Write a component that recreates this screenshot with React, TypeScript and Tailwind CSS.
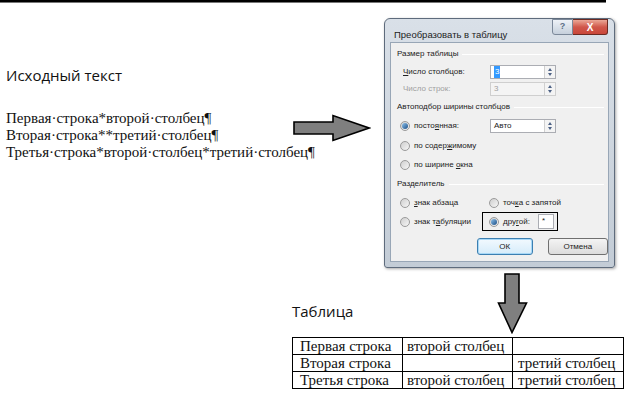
import { ReactNode } from 'react'

const ui = { fontFamily: '"Liberation Sans", Arial, sans-serif' }
const serif = { fontFamily: '"Liberation Serif", "Times New Roman", serif' }
const calibri = { fontFamily: '"Open Sans", "Noto Sans", sans-serif' }

function RightArrow() {
  return (
    <svg width="78" height="28" viewBox="0 0 78 28" className="mt-[111px] ml-[1px] shrink-0">
      <polygon points="1,8 40,8 40,1.5 76,14 40,26.5 40,20 1,20" fill="#7f7f7f" stroke="#000" strokeWidth="1.6" strokeLinejoin="miter" />
    </svg>
  )
}

function DownArrow() {
  return (
    <svg width="31" height="61" viewBox="0 0 31 61" className="shrink-0 ml-[2px]">
      <polygon points="8,1 22,1 22,30 29.5,30 15,59.5 1.5,30 8,30" fill="#7f7f7f" stroke="#000" strokeWidth="1.6" />
    </svg>
  )
}

function Radio({ checked }: { checked?: boolean }) {
  return (
    <span className="w-[10px] h-[10px] rounded-full border border-[#9a9a9a] bg-gradient-to-br from-[#cfcfcf] to-[#f6f6f6] flex items-center justify-center shrink-0">
      {checked && <span className="w-[6px] h-[6px] rounded-full bg-gradient-to-br from-[#8fc4ee] to-[#1b4f86]" />}
    </span>
  )
}

function Spin() {
  return (
    <span className="ml-auto w-[11px] h-full border-l border-[#d0d0d0] bg-[#f4f4f4] flex flex-col items-center justify-center gap-[2px]">
      <span className="w-0 h-0 border-x-[2.5px] border-x-transparent border-b-[3px] border-b-[#4d6185]" />
      <span className="w-0 h-0 border-x-[2.5px] border-x-transparent border-t-[3px] border-t-[#4d6185]" />
    </span>
  )
}

function Field({ children, disabled }: { children: ReactNode; disabled?: boolean }) {
  return (
    <span className={`ml-auto mr-[52px] w-[66px] h-[14px] border flex items-center pl-[3px] ${disabled ? 'border-[#cfcfcf] bg-[#f4f4f4] text-[#a0a0a0]' : 'border-[#abadb3] bg-white'}`}>
      {children}
      <Spin />
    </span>
  )
}

function Group({ label }: { label: string }) {
  return (
    <div className="flex items-center gap-[4px] pl-[6px] pr-[4px]">
      <span>{label}</span>
      <span className="flex-1 h-px bg-[#dcdcdc] border-b border-white" />
    </div>
  )
}

function Dialog() {
  return (
    <div className="mt-[15px] w-[231px] h-[250px] rounded-t-[6px] rounded-b-[3px] border border-[#5e6b7c] bg-gradient-to-b from-[#d9e0e8] to-[#c3ccd6] px-[5px] pb-[5px] flex flex-col shrink-0 shadow-[1px_1px_3px_rgba(0,0,0,0.35)]" style={ui}>
      <div className="h-[23px] flex items-start text-[9.5px] text-[#1c1c1c]">
        <span className="pl-[4px] pt-[9px]">Преобразовать в таблицу</span>
        <div className="ml-auto mr-[1px] flex">
          <span className="w-[21px] h-[16px] border border-[#7b8899] rounded-bl-[3px] bg-gradient-to-b from-[#eef2f7] to-[#c6d0dc] text-[9px] font-bold text-[#5d6f86] flex items-center justify-center">?</span>
          <span className="w-[35px] h-[16px] border border-[#6b2a22] border-l-0 rounded-br-[3px] bg-gradient-to-b from-[#eaa797] via-[#d0574b] to-[#c9473a] text-white text-[10px] font-bold flex items-center justify-center">X</span>
        </div>
      </div>
      <div className="flex-1 bg-[#f0f0f0] border border-[#98a6b6] flex flex-col text-[8px] text-[#222] pt-[2px]">
        <div className="h-[18px] flex items-center"><div className="w-full"><Group label="Размер таблицы" /></div></div>
        <div className="h-[17px] flex items-center pl-[12px]">
          <span><span className="underline">Ч</span>исло столбцов:</span>
          <Field><span className="bg-[#3399ff] text-white px-[1px]">3</span></Field>
        </div>
        <div className="h-[18px] flex items-center pl-[12px] text-[#a0a0a0]">
          <span>Число строк:</span>
          <Field disabled>3</Field>
        </div>
        <div className="h-[18px] flex items-center"><div className="w-full"><Group label="Автоподбор ширины столбцов" /></div></div>
        <div className="h-[20px] flex items-center pl-[9px] gap-[4px]">
          <Radio checked />
          <span>посто<span className="underline">я</span>нная:</span>
          <Field>Авто</Field>
        </div>
        <div className="h-[19px] flex items-center pl-[9px] gap-[4px]">
          <Radio />
          <span>по содер<span className="underline">ж</span>имому</span>
        </div>
        <div className="h-[19px] flex items-center pl-[9px] gap-[4px]">
          <Radio />
          <span>по ширине <span className="underline">о</span>кна</span>
        </div>
        <div className="h-[20px] flex items-center"><div className="w-full"><Group label="Разделитель" /></div></div>
        <div className="h-[18px] flex items-center pl-[9px]">
          <span className="w-[89px] flex items-center gap-[4px]">
            <Radio />
            <span><span className="underline">з</span>нак абзаца</span>
          </span>
          <span className="flex items-center gap-[4px]">
            <Radio />
            <span>точ<span className="underline">к</span>а с запятой</span>
          </span>
        </div>
        <div className="h-[19px] flex items-center pl-[9px]">
          <span className="w-[82px] flex items-center gap-[4px]">
            <Radio />
            <span>знак т<span className="underline">а</span>буляции</span>
          </span>
          <span className="w-[76px] h-[19px] border border-black flex items-center pl-[6px] gap-[4px]">
            <Radio checked />
            <span>дру<span className="underline">г</span>ой:</span>
            <span className="ml-auto mr-[3px] w-[16px] h-[15px] border border-[#abadb3] bg-white pl-[3px] leading-[12px]">*</span>
          </span>
        </div>
        <div className="mt-[7px] h-[17px] flex items-center gap-[15px] pl-[86px]">
          <span className="w-[56px] h-[17px] rounded-[3px] border border-[#3c7fb1] bg-gradient-to-b from-[#f2f9fe] to-[#d6ecfa] shadow-[inset_0_0_0_1px_#a7d8f7] flex items-center justify-center">ОК</span>
          <span className="w-[61px] h-[17px] rounded-[3px] border border-[#707070] bg-gradient-to-b from-[#f4f4f4] to-[#dcdcdc] flex items-center justify-center">Отмена</span>
        </div>
      </div>
    </div>
  )
}

const rows = [
  ['Первая строка', 'второй столбец', ''],
  ['Вторая строка', '', 'третий столбец'],
  ['Третья строка', 'второй столбец', 'третий столбец'],
]

export default function App() {
  return (
    <div className="w-[625px] h-[394px] bg-white overflow-hidden">
      <div className="w-[606px] h-[3px] bg-black border-b border-[#777]" />

      <div className="flex">
        <div className="w-[292px] pl-[6px] shrink-0">
          <div className="mt-[62px] text-[15px] leading-[20px] text-[#111]" style={calibri}>Исходный текст</div>
          <div className="mt-[25px] text-[15px] leading-[17px] text-[#111] whitespace-nowrap" style={serif}>
            <div>Первая·строка*второй·столбец¶</div>
            <div>Вторая·строка**третий·столбец¶</div>
            <div>Третья·строка*второй·столбец*третий·столбец¶</div>
          </div>
        </div>
        <RightArrow />
        <div className="ml-[13px]">
          <Dialog />
        </div>
      </div>

      <div className="ml-[292px] mt-[5px]">
        <div className="flex items-start">
          <div className="w-[203px] mt-[28px] text-[15px] leading-[20px] text-[#111]" style={calibri}>Таблица</div>
          <DownArrow />
        </div>
        <table className="mt-[3px] border-collapse text-[15px] leading-[15px] text-[#111]" style={serif}>
          <tbody>
            {rows.map((r, i) => (
              <tr key={i} className="h-[17px]">
                <td className="w-[110px] border border-black pl-[7px] p-0 whitespace-nowrap">{r[0]}</td>
                <td className="w-[110px] border border-black pl-[4px] p-0 whitespace-nowrap">{r[1]}</td>
                <td className="w-[111px] border border-black pl-[5px] p-0 whitespace-nowrap">{r[2]}</td>
              </tr>
            ))}
          </tbody>
        </table>
      </div>
    </div>
  )
}
